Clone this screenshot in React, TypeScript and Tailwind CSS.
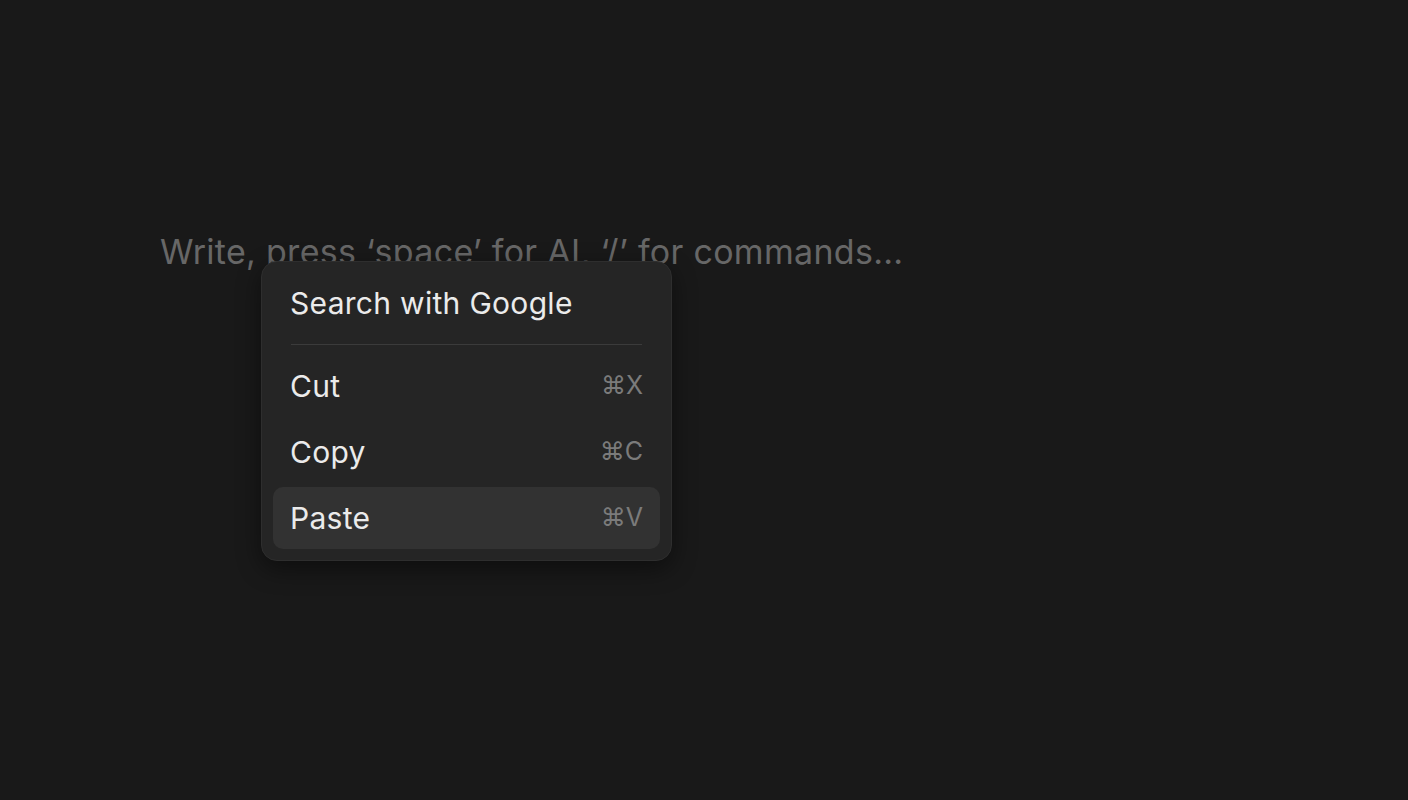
import React from 'react';

type Item = { label: string; shortcut?: string; active?: boolean };

const items: Item[] = [
  { label: 'Cut', shortcut: '⌘X' },
  { label: 'Copy', shortcut: '⌘C' },
  { label: 'Paste', shortcut: '⌘V', active: true },
];

function MenuRow({ label, shortcut, active }: Item) {
  return (
    <div
      className={`flex items-center justify-between h-[62px] pl-[17px] pr-[17px] rounded-[10px] ${
        active ? 'bg-[#323232]' : ''
      }`}
    >
      <span className="text-[30px] text-[#ebebeb] tracking-[0.3px]">{label}</span>
      {shortcut && <span className="text-[25px] text-[#7b7b7b]">{shortcut}</span>}
    </div>
  );
}

export default function App() {
  return (
    <div
      className="relative w-full h-[800px] bg-[#191919] overflow-hidden"
      style={{ fontFamily: 'Inter, "Noto Sans", "DejaVu Sans", sans-serif' }}
    >
      {/* editor placeholder */}
      <div className="pt-[230px] pl-[160px] text-[34px] text-[#676767] tracking-[0.3px] leading-[44px]">
        Write, press ‘space’ for AI, ‘/’ for commands...
      </div>

      {/* context menu */}
      <div className="absolute left-[261px] top-[261px] w-[411px] p-[11px] pt-[10px] rounded-[16px] bg-[#252525] border border-[#2e2e2e] shadow-[0_8px_24px_rgba(0,0,0,0.45)]">
        <MenuRow label="Search with Google" />
        <div className="mx-[18px] my-[10px] h-px bg-[#3b3b3b]" />
        <div className="flex flex-col gap-[4px]">
          {items.map(it => (
            <MenuRow key={it.label} {...it} />
          ))}
        </div>
      </div>
    </div>
  );
}
